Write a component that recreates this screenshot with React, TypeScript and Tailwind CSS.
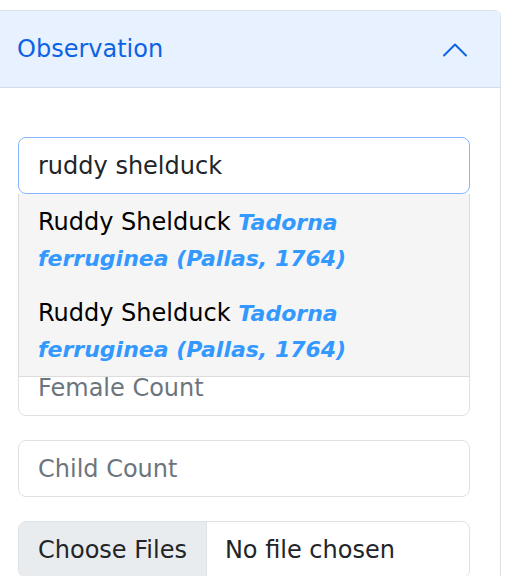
import { useState } from "react";

const font = { fontFamily: "'DejaVu Sans', 'Noto Sans', sans-serif" };

const suggestions = [
  { common: "Ruddy Shelduck", scientific: "Tadorna ferruginea (Pallas, 1764)" },
  { common: "Ruddy Shelduck", scientific: "Tadorna ferruginea (Pallas, 1764)" },
];

function ChevronUp() {
  return (
    <svg width="26" height="15" viewBox="0 0 26 15" fill="none" className="text-[#0c63e4]">
      <polyline points="2,13.5 13,2.5 24,13.5" stroke="currentColor" strokeWidth="2" strokeLinecap="round" strokeLinejoin="round" />
    </svg>
  );
}

export default function App() {
  const [query, setQuery] = useState("ruddy shelduck");
  const [open, setOpen] = useState(true);

  return (
    <div className="min-h-screen bg-white pt-[10px] pr-[7px] overflow-hidden" style={font}>
      <div className="-ml-px border border-[#dee2e6] rounded-tr-md bg-white">
        {/* Accordion header */}
        <button
          className="w-full h-[77px] flex items-center justify-between pl-[17px] pr-[32px] bg-[#e7f1ff] border-b border-[#d3dbe6] rounded-tr-md text-left"
          onClick={() => setOpen(!open)}
        >
          <span className="text-[24px] text-[#0c63e4]">Observation</span>
          <ChevronUp />
        </button>

        {/* Body */}
        <div className="pt-[49px] pl-[18px] pr-[30px] flex flex-col gap-6 text-[24px]">
          <div className="relative">
            <input
              value={query}
              onChange={(e) => setQuery(e.target.value)}
              className="w-full h-[57px] px-[19px] border border-[#86b7fe] rounded-lg text-[#212529] outline-none bg-white"
            />
            {open && (
              <ul className="absolute left-0 right-0 top-[57px] z-10 bg-[#f5f5f5] border border-[#dcdcdc] border-t-0">
                {suggestions.map((s, i) => (
                  <li key={i} className="pl-[19px] pr-[60px] pt-[10px] pb-[9px] leading-[36px] text-black">
                    {s.common}{" "}
                    <em className="font-bold text-[22px] leading-none text-[#3399ff]">{s.scientific}</em>
                  </li>
                ))}
              </ul>
            )}
          </div>

          <textarea
            placeholder="Remarks"
            className="w-full h-[117px] px-[19px] py-3 border border-[#dee2e6] rounded-lg outline-none placeholder:text-[#6c757d] resize-none"
          />

          <input
            placeholder="Female Count"
            className="w-full h-[57px] px-[19px] border border-[#dee2e6] rounded-lg outline-none placeholder:text-[#6c757d]"
          />

          <input
            placeholder="Child Count"
            className="w-full h-[57px] px-[19px] border border-[#dee2e6] rounded-lg outline-none placeholder:text-[#6c757d]"
          />

          <div className="w-full h-[57px] flex border border-[#dee2e6] rounded-lg overflow-hidden">
            <span className="flex items-center px-[19px] bg-[#e9ecef] border-r border-[#dee2e6] text-[#212529]">Choose Files</span>
            <span className="flex items-center px-[18px] text-[#212529]">No file chosen</span>
          </div>
        </div>
      </div>
    </div>
  );
}
